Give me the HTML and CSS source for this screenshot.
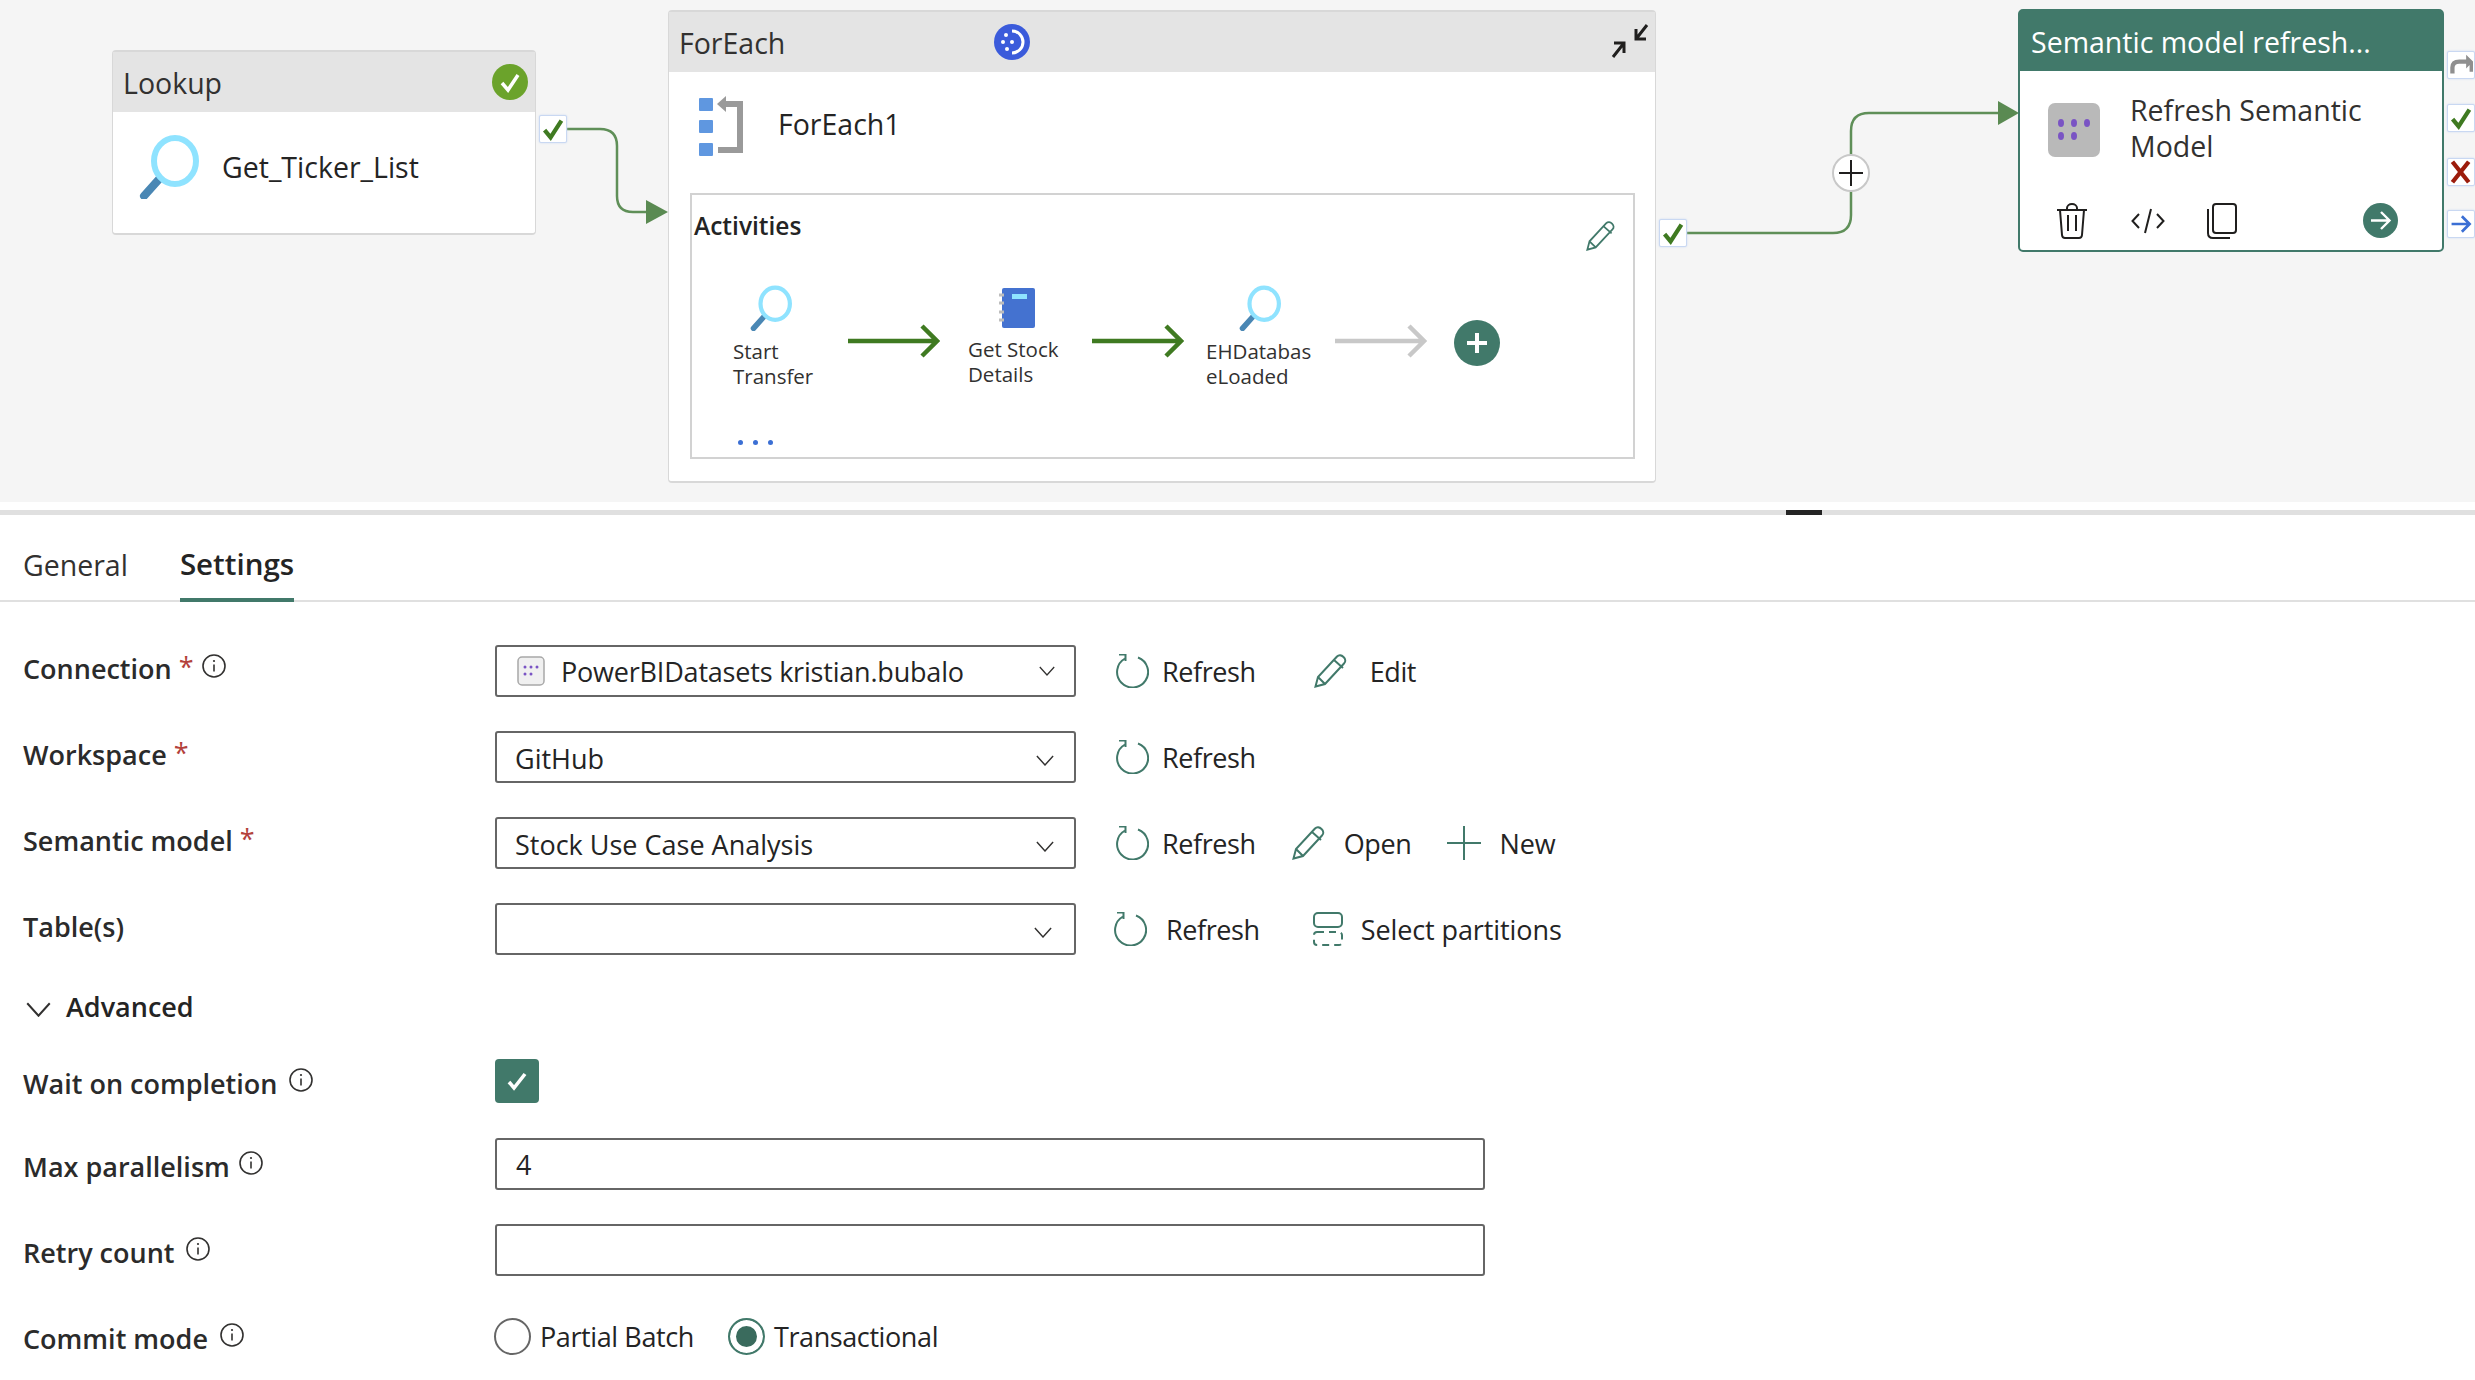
FILE: index.html
```html
<!DOCTYPE html>
<html>
<head>
  <title>Pipeline settings</title>
  <meta charset="utf-8">
  <link rel="stylesheet" href="styles.css">
</head>
<body>
  <svg class="sprite" width="0" height="0">
    <symbol id="info" viewBox="0 0 24 24"><circle cx="12" cy="12" r="11" fill="none" stroke="#323130" stroke-width="1.6"/><path d="M12 10.5v7" stroke="#323130" stroke-width="1.6"/><circle cx="12" cy="7" r="1.1" fill="#323130"/></symbol>
    <symbol id="refresh" viewBox="0 0 34 34"><path d="M10 4.5A15.5 15.5 0 1 0 23 3.5" fill="none" stroke="#41796a" stroke-width="2"/><path d="M4 1h6.5v6.5" transform="translate(0 -0.5)" fill="none" stroke="#41796a" stroke-width="2"/></symbol>
    <symbol id="pencil" viewBox="0 0 34 34"><path d="M1.5 32.5l2.5-9.5L23 2.5c2-2 4.5-1.5 6.500 0.500s2.500 4.500 .500 6.500L11 30z M4 23l7 7 M20 6l9 8" fill="none" stroke="#41796a" stroke-width="2"/></symbol>
    <symbol id="chevron" viewBox="0 0 20 12"><path d="M1 1l9 10 9-10" fill="none" stroke="#323130" stroke-width="1.600"/></symbol>
    <symbol id="tick" viewBox="0 0 20 20"><path d="M3 11l5 6L17 3" fill="none" stroke="#3f7a21" stroke-width="3.500"/></symbol>
    <symbol id="glass" viewBox="0 0 60 64"><path d="M22 42L5 61" stroke="#4a87b4" stroke-width="8" stroke-linecap="round"/><ellipse cx="36" cy="26" rx="21" ry="23" fill="#fff" stroke="#8fe3ff" stroke-width="6"/></symbol>
  </svg>

  <div class="canvas">
    <svg class="wires" width="2475" height="502">
      <path d="M566 129H600q17 0 17 17V196q0 16 16 16H648" fill="none" stroke="#5f8f58" stroke-width="2.500"/>
      <path d="M646 200L668 212L646 224Z" fill="#5a8a52"/>
      <path d="M1686 233H1833q18 0 18-18V131q0-18 18-18H2000" fill="none" stroke="#5f8f58" stroke-width="2.500"/>
      <path d="M1998 101L2019 113L1998 125Z" fill="#5a8a52"/>
    </svg>

    <div class="node lookup">
      <div class="node-head">Lookup
        <svg class="status" viewBox="0 0 36 36"><circle cx="18" cy="18" r="18" fill="#6ba32b"/><path d="M10 19l6 7 10-15" fill="none" stroke="#fff" stroke-width="3.500"/></svg>
      </div>
      <div class="lookup-body">
        <svg class="glass-big"><use href="#glass"/></svg>
        <span>Get_Ticker_List</span>
      </div>
    </div>
    <div class="port port-lookup"><svg><use href="#tick"/></svg></div>

    <div class="node foreach">
      <div class="node-head">ForEach
        <svg class="sync" viewBox="0 0 36 36"><circle cx="18" cy="18" r="18" fill="#3b5bdb"/><path d="M18 7a11 11 0 0 1 0 22" fill="none" stroke="#fff" stroke-width="3"/><circle cx="12" cy="11" r="2" fill="#fff"/><circle cx="9" cy="18" r="2" fill="#fff"/><circle cx="13" cy="25" r="2" fill="#fff"/><circle cx="18" cy="18" r="2" fill="#fff"/></svg>
        <svg class="collapse" viewBox="0 0 40 36"><path d="M37 2L26 16M26 6v10h10M3 34L14 20M14 30V20H4" fill="none" stroke="#201f1e" stroke-width="3"/></svg>
      </div>
      <div class="foreach-title">
        <svg class="foreach-icon" viewBox="0 0 44 60"><rect y="2" width="14" height="13" rx="1" fill="#5f97e0"/><rect y="24" width="14" height="13" rx="1" fill="#5f97e0"/><rect y="47" width="14" height="13" rx="1" fill="#5f97e0"/><path d="M24 8H41V54H19" fill="none" stroke="#9a9a9a" stroke-width="6"/><path d="M18 8L27 0V16Z" fill="#9a9a9a"/></svg>
        <span>ForEach1</span>
      </div>
      <div class="activities">
        <div class="activities-label">Activities</div>
        <svg class="edit-inner"><use href="#pencil"/></svg>
        <div class="activity act-start">
          <svg class="glass-small"><use href="#glass"/></svg>
          <span>Start<br>Transfer</span>
        </div>
        <svg class="flow flow-1" viewBox="0 0 92 34"><path d="M0 17H88M74 2l15 15-15 15" fill="none" stroke="#3f7a21" stroke-width="4.500"/></svg>
        <div class="activity act-notebook">
          <svg class="notebook" viewBox="0 0 36 40"><rect x="3" width="33" height="40" rx="2" fill="#4472d0"/><rect x="13" y="6" width="15" height="5" fill="#8fe3ff"/><path d="M0 7h5M0 15h5M0 24h5M0 32h5" stroke="#bdbdbd" stroke-width="3"/></svg>
          <span>Get Stock<br>Details</span>
        </div>
        <svg class="flow flow-2" viewBox="0 0 92 34"><path d="M0 17H88M74 2l15 15-15 15" fill="none" stroke="#3f7a21" stroke-width="4.500"/></svg>
        <div class="activity act-eh">
          <svg class="glass-small"><use href="#glass"/></svg>
          <span>EHDatabas<br>eLoaded</span>
        </div>
        <svg class="flow flow-3" viewBox="0 0 92 34"><path d="M0 17H88M74 2l15 15-15 15" fill="none" stroke="#c8c8c8" stroke-width="4.500"/></svg>
        <svg class="add-activity" viewBox="0 0 46 46"><circle cx="23" cy="23" r="23" fill="#41796a"/><path d="M23 13v20M13 23h20" stroke="#fff" stroke-width="4"/></svg>
        <div class="more-dots"><i></i><i></i><i></i></div>
      </div>
    </div>
    <div class="port port-foreach"><svg><use href="#tick"/></svg></div>

    <svg class="wire-add" viewBox="0 0 38 38"><circle cx="19" cy="19" r="18" fill="#fff" stroke="#c8c8c8" stroke-width="2"/><path d="M19 6v26M7 19h24" stroke="#201f1e" stroke-width="2"/></svg>

    <div class="node semantic">
      <div class="node-head">Semantic model refresh...</div>
      <div class="semantic-body">
        <svg class="semantic-icon" viewBox="0 0 52 54"><rect width="52" height="54" rx="7" fill="#b9b9b9"/><g fill="#7a54c4"><ellipse cx="13" cy="20" rx="3" ry="4"/><ellipse cx="26" cy="20" rx="3" ry="4"/><ellipse cx="39" cy="20" rx="3" ry="4"/><ellipse cx="13" cy="33" rx="3" ry="4"/><ellipse cx="26" cy="33" rx="3" ry="4"/></g></svg>
        <span>Refresh Semantic<br>Model</span>
      </div>
      <div class="semantic-tools">
        <svg class="tool-trash" viewBox="0 0 32 36"><path d="M1 7h30M11 7V5a5 4 0 0 1 10 0v2M4 7l2 25q.3 3 3 3h14q2.700 0 3-3l2-25M12 12v16M20 12v16" fill="none" stroke="#201f1e" stroke-width="2"/></svg>
        <svg class="tool-code" viewBox="0 0 34 26"><path d="M8 6L1.500 13 8 20M26 6l6.500 7L26 20M20 1L14 25" fill="none" stroke="#201f1e" stroke-width="2"/></svg>
        <svg class="tool-copy" viewBox="0 0 30 36"><rect x="6" y="1" width="23" height="29" rx="3" fill="none" stroke="#201f1e" stroke-width="2"/><path d="M1 6v24q0 5 5 5h17" fill="none" stroke="#201f1e" stroke-width="2"/></svg>
        <svg class="tool-go" viewBox="0 0 35 35"><circle cx="17.500" cy="17.500" r="17.500" fill="#41796a"/><path d="M8 17.500h18M18 9l8.500 8.500L18 26" fill="none" stroke="#fff" stroke-width="2.400"/></svg>
      </div>
    </div>
    <div class="port port-skip"><svg viewBox="0 0 28 28"><path d="M3 24V17q0-7 8-7h12" transform="translate(1 0)" fill="none" stroke="#8f8f8f" stroke-width="5"/><path d="M20 2l8 8-8 8z M24 10h4v12h-4z" fill="#8f8f8f"/></svg></div>
    <div class="port port-ok"><svg><use href="#tick"/></svg></div>
    <div class="port port-fail"><svg viewBox="0 0 28 28"><path d="M4 2l19 24M23 2L4 26" stroke="#9c1c0c" stroke-width="5"/></svg></div>
    <div class="port port-done"><svg viewBox="0 0 28 28"><path d="M3 14h21M15 5l9 9-9 9" fill="none" stroke="#3b6fd4" stroke-width="3.200"/></svg></div>
  </div>

  <div class="panel">
    <div class="splitter"><div class="splitter-handle"></div></div>

    <div class="tabs">
      <div class="tab">General</div>
      <div class="tab active">Settings</div>
    </div>

    <div class="form">
      <div class="row row-pick">
        <div class="label">Connection <b class="req">*</b><svg class="info info-connection"><use href="#info"/></svg></div>
        <div class="select">
          <svg class="conn-icon" viewBox="0 0 28 30"><rect x="1" y="1" width="26" height="28" rx="4" fill="#f0f0f0" stroke="#a8a8a8" stroke-width="1.500"/><g fill="#7a54c4"><circle cx="8" cy="11" r="1.500"/><circle cx="14" cy="11" r="1.500"/><circle cx="20" cy="11" r="1.500"/><circle cx="8" cy="18" r="1.500"/><circle cx="14" cy="18" r="1.500"/></g></svg>
          <span class="select-value conn-value">PowerBIDatasets kristian.bubalo</span>
          <svg class="chevron chevron-small"><use href="#chevron"/></svg>
        </div>
        <div class="actions">
          <div class="action"><svg class="ico"><use href="#refresh"/></svg>Refresh</div>
          <div class="action action-edit"><svg class="ico"><use href="#pencil"/></svg>Edit</div>
        </div>
      </div>

      <div class="row row-pick">
        <div class="label">Workspace <b class="req">*</b></div>
        <div class="select"><span class="select-value">GitHub</span><svg class="chevron"><use href="#chevron"/></svg></div>
        <div class="actions">
          <div class="action"><svg class="ico"><use href="#refresh"/></svg>Refresh</div>
        </div>
      </div>

      <div class="row row-pick">
        <div class="label">Semantic model <b class="req">*</b></div>
        <div class="select"><span class="select-value">Stock Use Case Analysis</span><svg class="chevron"><use href="#chevron"/></svg></div>
        <div class="actions">
          <div class="action"><svg class="ico"><use href="#refresh"/></svg>Refresh</div>
          <div class="action action-open"><svg class="ico"><use href="#pencil"/></svg>Open</div>
          <div class="action action-new"><svg class="ico" viewBox="0 0 34 34"><path d="M17 0v34M0 17h34" stroke="#41796a" stroke-width="2"/></svg>New</div>
        </div>
      </div>

      <div class="row row-pick">
        <div class="label">Table(s)</div>
        <div class="select"><span class="select-value"></span><svg class="chevron chevron-last"><use href="#chevron"/></svg></div>
        <div class="actions actions-wide">
          <div class="action action-refresh-wide"><svg class="ico"><use href="#refresh"/></svg>Refresh</div>
          <div class="action action-partitions"><svg class="ico" viewBox="0 0 30 34"><rect x="1" y="1" width="28" height="14" rx="4" fill="none" stroke="#41796a" stroke-width="2"/><rect x="1" y="20" width="28" height="13" rx="3" fill="none" stroke="#41796a" stroke-width="2" stroke-dasharray="7 5"/></svg>Select partitions</div>
        </div>
      </div>

      <div class="advanced"><svg class="chevron-adv"><use href="#chevron"/></svg>Advanced</div>

      <div class="row row-check">
        <div class="label">Wait on completion<svg class="info"><use href="#info"/></svg></div>
        <div class="checkbox"><svg viewBox="0 0 24 24"><path d="M4 13l5 6L20 5" fill="none" stroke="#fff" stroke-width="3.600"/></svg></div>
      </div>

      <div class="row">
        <div class="label">Max parallelism<svg class="info info-tight"><use href="#info"/></svg></div>
        <div class="textbox">4</div>
      </div>

      <div class="row">
        <div class="label">Retry count<svg class="info"><use href="#info"/></svg></div>
        <div class="textbox"></div>
      </div>

      <div class="row row-radio">
        <div class="label">Commit mode<svg class="info"><use href="#info"/></svg></div>
        <div class="radios">
          <div class="radio"><i class="dot"></i>Partial Batch</div>
          <div class="radio on"><i class="dot"></i>Transactional</div>
        </div>
      </div>
    </div>
  </div>
</body>
</html>
```
FILE: styles.css
```css
* {
  box-sizing: border-box;
}

html, body {
  margin: 0;
  height: 100%;
  overflow: hidden;
}

body {
  background-color: #fff;
  color: #242424;
  font-family: "Open Sans", "Noto Sans", sans-serif;
  font-size: 27px;
}

.sprite {
  display: block;
  height: 0;
}

svg {
  display: block;
  flex: none;
}

/* Diagram canvas: everything in here sits on a free canvas */
.canvas {
  position: relative;
  height: 502px;
  background-color: #f5f5f5;
  overflow: hidden;
  font-size: 28.5px;
}

.wires {
  position: absolute;
  left: 0;
  top: 0;
}

.node {
  position: absolute;
  background-color: #fff;
  border: 1px solid #d8d8d8;
  border-top-width: 2px;
  border-bottom-width: 2px;
  border-radius: 4px;
}

.node-head {
  display: flex;
  align-items: center;
  height: 60px;
  padding: 1px 0 0 10px;
  background-color: #e4e4e4;
  color: #323130;
  position: relative;
}

.lookup {
  left: 112px;
  top: 50px;
  width: 424px;
  height: 185px;
}

.status {
  position: absolute;
  right: 7px;
  top: 12px;
  width: 36px;
  height: 36px;
}

.lookup-body {
  display: flex;
  align-items: center;
  gap: 23px;
  padding: 23px 0 0 26px;
}

.glass-big {
  width: 60px;
  height: 64px;
}

.foreach {
  left: 668px;
  top: 10px;
  width: 988px;
  height: 473px;
}

.foreach-title {
  display: flex;
  align-items: center;
  gap: 35px;
  padding: 24px 0 0 30px;
}

.foreach-title span {
  margin-top: -4px;
}

.foreach-icon {
  width: 44px;
  height: 60px;
}

.sync {
  position: absolute;
  left: 325px;
  top: 12px;
  width: 36px;
  height: 36px;
}

.collapse {
  position: absolute;
  right: 5px;
  top: 11px;
  width: 40px;
  height: 36px;
}

.activities {
  position: absolute;
  left: 21px;
  top: 181px;
  width: 945px;
  height: 266px;
  border: 2px solid #d2d2d2;
  background-color: #fff;
}

.activities-label {
  position: absolute;
  left: 2px;
  top: 14px;
  font-size: 24.5px;
  font-weight: 600;
}

.edit-inner {
  position: absolute;
  left: 894px;
  top: 25px;
  width: 30px;
  height: 32px;
}

.activity {
  position: absolute;
  font-size: 20.5px;
  line-height: 25px;
  color: #323130;
}

.act-start {
  left: 41px;
  top: 90px;
}

.act-notebook {
  left: 276px;
  top: 93px;
}

.act-eh {
  left: 514px;
  top: 90px;
}

.activity span {
  display: block;
}

.glass-small {
  width: 42px;
  height: 46px;
  margin-left: 17px;
  margin-bottom: 8px;
}

.act-eh .glass-small {
  margin-left: 33px;
}

.notebook {
  width: 36px;
  height: 40px;
  margin-left: 31px;
  margin-bottom: 9px;
}

.flow {
  position: absolute;
  top: 129px;
  width: 92px;
  height: 34px;
}

.flow-1 {
  left: 156px;
}

.flow-2 {
  left: 400px;
}

.flow-3 {
  left: 643px;
}

.add-activity {
  position: absolute;
  left: 762px;
  top: 125px;
  width: 46px;
  height: 46px;
}

.more-dots {
  position: absolute;
  left: 46px;
  top: 245px;
  display: flex;
  gap: 10px;
}

.more-dots i {
  width: 5px;
  height: 5px;
  border-radius: 50%;
  background-color: #3b6fd4;
}

.port {
  position: absolute;
  width: 28px;
  height: 28px;
  background-color: #fff;
  border: 1px solid #c9d8f2;
  box-shadow: 0 0 2px #c9d8f2;
  border-radius: 2px;
  display: flex;
  align-items: center;
  justify-content: center;
}

.port svg {
  width: 24px;
  height: 24px;
}

.port-lookup {
  left: 539px;
  top: 115px;
}

.port-foreach {
  left: 1659px;
  top: 219px;
}

.port-skip {
  left: 2447px;
  top: 51px;
}

.port-ok {
  left: 2447px;
  top: 104px;
}

.port-fail {
  left: 2447px;
  top: 158px;
}

.port-done {
  left: 2447px;
  top: 210px;
}

.wire-add {
  position: absolute;
  left: 1832px;
  top: 154px;
  width: 38px;
  height: 38px;
}

.semantic {
  left: 2018px;
  top: 9px;
  width: 426px;
  height: 243px;
  border: 2px solid #41796a;
  border-radius: 5px;
}

.semantic .node-head {
  height: 60px;
  padding-left: 11px;
  background-color: #41796a;
  color: #fff;
}

.semantic-body {
  display: flex;
  gap: 30px;
  padding: 21px 0 0 28px;
  line-height: 36px;
  color: #323130;
}

.semantic-icon {
  width: 52px;
  height: 54px;
  margin-top: 11px;
}

.semantic-tools {
  position: absolute;
  left: 0;
  top: 192px;
  height: 36px;
  width: 100%;
}

.semantic-tools svg {
  position: absolute;
  top: 0;
}

.tool-trash {
  left: 36px;
  width: 32px;
  height: 36px;
}

.semantic-tools .tool-code {
  left: 111px;
  top: 5px;
  width: 34px;
  height: 26px;
}

.tool-copy {
  left: 187px;
  width: 30px;
  height: 36px;
}

.tool-go {
  left: 343px;
  width: 35px;
  height: 35px;
}

/* Lower panel */
.panel {
  background-color: #fff;
}

.splitter {
  display: flex;
  height: 5px;
  margin-top: 8px;
  padding-left: 1786px;
  background-color: #e0e0e0;
}

.splitter-handle {
  width: 36px;
  background-color: #242424;
}

.tabs {
  display: flex;
  gap: 52px;
  height: 87px;
  padding-left: 23px;
  border-bottom: 2px solid #e0e0e0;
}

.tab {
  display: flex;
  align-items: center;
  height: 87px;
  padding-top: 12px;
  font-size: 28.5px;
  color: #323130;
}

.tab.active {
  padding-top: 14px;
  font-size: 29.5px;
  font-weight: 600;
  border-bottom: 4px solid #41796a;
  color: #242424;
}

.form {
  padding: 43px 0 0 23px;
}

.row {
  display: flex;
  align-items: center;
  height: 52px;
  margin-bottom: 34px;
}

.label {
  display: flex;
  align-items: center;
  width: 472px;
  font-weight: 600;
  color: #2b2b2b;
  padding-top: 4px;
}

.row-pick .label {
  padding-top: 0;
  padding-bottom: 5px;
}

.req {
  color: #b3413b;
  font-weight: 400;
  margin: -4px 0 0 7px;
}

.info {
  width: 24px;
  height: 24px;
  margin: -7px 0 0 12px;
}

.row-pick .info {
  margin-top: -5px;
}

.row-pick .info-connection {
  margin-left: 8px;
}

.info-tight {
  margin-left: 9px;
}

.select {
  display: flex;
  align-items: center;
  width: 581px;
  height: 52px;
  padding-left: 18px;
  border: 2px solid #666;
  border-radius: 3px;
}

.conn-icon {
  width: 28px;
  height: 30px;
  margin: 0 16px 0 2px;
}

.select-value {
  flex: 1;
  padding-top: 2px;
}

.conn-value {
  padding-top: 0;
  letter-spacing: -0.2px;
}

.chevron {
  width: 18px;
  height: 11px;
  margin: 6px 20px 0 0;
}

.chevron-small {
  width: 16px;
  height: 10px;
  margin: 0 19px 0 0;
}

.chevron-last {
  margin-right: 22px;
}

.actions {
  display: flex;
  align-items: center;
  gap: 36px;
  margin-left: 39px;
}

.action {
  display: flex;
  align-items: center;
  gap: 13px;
  letter-spacing: -0.4px;
}

.ico {
  width: 34px;
  height: 34px;
}

.action-open {
  gap: 18px;
}

.action-new {
  gap: 18px;
  letter-spacing: 0;
}

.action-edit {
  margin-left: 22px;
  gap: 22px;
}

.action-refresh-wide {
  gap: 19px;
}

.action-partitions {
  margin-left: 15px;
  gap: 16px;
  letter-spacing: -0.1px;
}

.actions-wide {
  margin-left: 37px;
}

.advanced {
  display: flex;
  align-items: center;
  gap: 14px;
  height: 40px;
  margin: -3px 0 33px 2px;
  font-weight: 600;
}

.chevron-adv {
  width: 27px;
  height: 15px;
  margin-top: 6px;
}

.row-check {
  height: 44px;
  margin-bottom: 35px;
}

.checkbox {
  width: 44px;
  height: 44px;
  padding: 10px;
  border-radius: 4px;
  background-color: #41796a;
}

.textbox {
  width: 990px;
  height: 52px;
  padding: 6px 19px;
  border: 2px solid #666;
  border-radius: 3px;
}

.row-radio {
  height: 38px;
  margin-top: 41px;
}

.radios {
  display: flex;
  align-items: center;
  gap: 34px;
  margin-left: -1px;
}

.radio {
  display: flex;
  align-items: center;
  gap: 9px;
  letter-spacing: -0.4px;
}

.dot {
  width: 37px;
  height: 37px;
  border: 2px solid #666;
  border-radius: 50%;
  background-color: #fff;
}

.radio.on .dot {
  border-color: #41796a;
  background-color: #3a6b5d;
  box-shadow: inset 0 0 0 6px #fff;
}
```
